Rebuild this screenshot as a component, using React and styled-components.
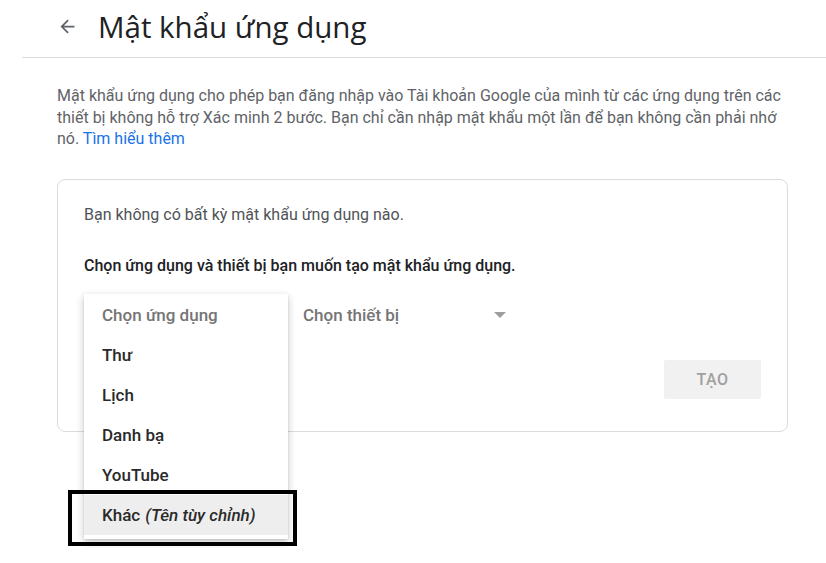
import React from "react";
import styled, { createGlobalStyle } from "styled-components";

const Global = createGlobalStyle`
  html, body { margin: 0; padding: 0; background: #fff; }
  body { font-family: Roboto, "Noto Sans", Arial, sans-serif; -webkit-font-smoothing: antialiased; }
  * { box-sizing: border-box; }
`;

const Page = styled.div`
  width: 826px;
  height: 563px;
  overflow: hidden;
  background: #fff;
`;

const Header = styled.header`
  margin-left: 22px;
  height: 58px;
  border-bottom: 1px solid #dadce0;
  display: flex;
  align-items: center;
  padding-left: 35px;
  padding-bottom: 4px;
  gap: 20px;
`;

const Back = styled.svg`
  width: 21px;
  height: 21px;
  fill: #5f6368;
  flex: none;
`;

const Title = styled.h1`
  margin: 0;
  font-family: "Open Sans", Roboto, sans-serif;
  font-weight: 400;
  font-size: 29.5px;
  color: #202124;
  letter-spacing: 0;
`;

const Content = styled.main`
  padding: 27px 38px 0 57px;
`;

const Intro = styled.p`
  margin: 0;
  font-size: 16px;
  line-height: 21.5px;
  color: #5f6368;
`;

const Link = styled.a`
  color: #1a73e8;
  text-decoration: none;
`;

const Card = styled.section`
  position: relative;
  margin-top: 29px;
  height: 253px;
  border: 1px solid #dadce0;
  border-radius: 8px;
  padding: 25px 26px 0 26px;
  display: flex;
  flex-direction: column;
`;

const Text = styled.p`
  margin: 0;
  font-size: 16px;
  line-height: 20px;
  color: ${(p) => (p.$strong ? "#202124" : "#4f5357")};
  font-weight: ${(p) => (p.$strong ? 500 : 400)};
  margin-top: ${(p) => p.$mt || 0}px;
`;

const SelectRow = styled.div`
  display: flex;
  gap: 15px;
  margin-top: 19px;
`;

const SelectWrap = styled.div`
  position: relative;
  width: ${(p) => p.$w}px;
`;

const Select = styled.div`
  height: 40px;
  display: flex;
  align-items: center;
  justify-content: space-between;
  padding: 0 0 0 ${(p) => p.$pl || 0}px;
  font-size: 17px;
  font-weight: 500;
  color: #757575;
`;

const Caret = styled.span`
  width: 0;
  height: 0;
  border-left: 6px solid transparent;
  border-right: 6px solid transparent;
  border-top: 6px solid #9e9e9e;
  margin-right: 2px;
`;

const Menu = styled.ul`
  position: absolute;
  left: 0;
  top: -1px;
  width: 204px;
  margin: 0;
  padding: 0 0 4px;
  list-style: none;
  background: #fff;
  box-shadow: 0 3px 8px rgba(0, 0, 0, 0.22), 0 1px 2px rgba(0, 0, 0, 0.1);
  z-index: 2;
`;

const Item = styled.li`
  height: 40px;
  display: flex;
  align-items: center;
  padding-left: 18px;
  font-size: 17px;
  font-weight: 500;
  color: ${(p) => (p.$placeholder ? "#757575" : "#2a2a2a")};
  background: ${(p) => (p.$active ? "#eeeeee" : "transparent")};
  margin-top: ${(p) => (p.$placeholder ? 1 : 0)}px;
`;

const Em = styled.em`
  font-style: italic;
  margin-left: 5px;
`;

const Callout = styled.div`
  position: absolute;
  left: -16px;
  top: 195px;
  width: 229px;
  height: 56px;
  border: 4px solid #000;
  pointer-events: none;
  z-index: 3;
`;

const Actions = styled.div`
  display: flex;
  justify-content: flex-end;
  margin-top: 25px;
`;

const Button = styled.button`
  width: 97px;
  height: 39px;
  border: none;
  border-radius: 2px;
  background: #f1f1f1;
  color: #a0a0a0;
  font-family: Roboto, sans-serif;
  font-size: 16px;
  font-weight: 500;
  letter-spacing: 0.5px;
`;

export default function App() {
  const items = ["Thư", "Lịch", "Danh bạ", "YouTube"];
  return (
    <Page>
      <Global />
      <Header>
        <Back viewBox="0 0 24 24">
          <path d="M20 11H7.83l5.59-5.59L12 4l-8 8 8 8 1.41-1.41L7.83 13H20v-2z" />
        </Back>
        <Title>Mật khẩu ứng dụng</Title>
      </Header>
      <Content>
        <Intro>
          Mật khẩu ứng dụng cho phép bạn đăng nhập vào Tài khoản Google của mình từ các ứng dụng trên các
          thiết bị không hỗ trợ Xác minh 2 bước. Bạn chỉ cần nhập mật khẩu một lần để bạn không cần phải nhớ
          nó. <Link href="#">Tìm hiểu thêm</Link>
        </Intro>
        <Card>
          <Text>Bạn không có bất kỳ mật khẩu ứng dụng nào.</Text>
          <Text $strong $mt={31}>Chọn ứng dụng và thiết bị bạn muốn tạo mật khẩu ứng dụng.</Text>
          <SelectRow>
            <SelectWrap $w={204}>
              <Select $pl={18}>Chọn ứng dụng</Select>
              <Menu>
                <Item $placeholder>Chọn ứng dụng</Item>
                {items.map((t) => (
                  <Item key={t}>{t}</Item>
                ))}
                <Item $active>
                  Khác<Em>(Tên tùy chỉnh)</Em>
                </Item>
              </Menu>
              <Callout />
            </SelectWrap>
            <SelectWrap $w={205}>
              <Select>
                Chọn thiết bị
                <Caret />
              </Select>
            </SelectWrap>
          </SelectRow>
          <Actions>
            <Button>TẠO</Button>
          </Actions>
        </Card>
      </Content>
    </Page>
  );
}
